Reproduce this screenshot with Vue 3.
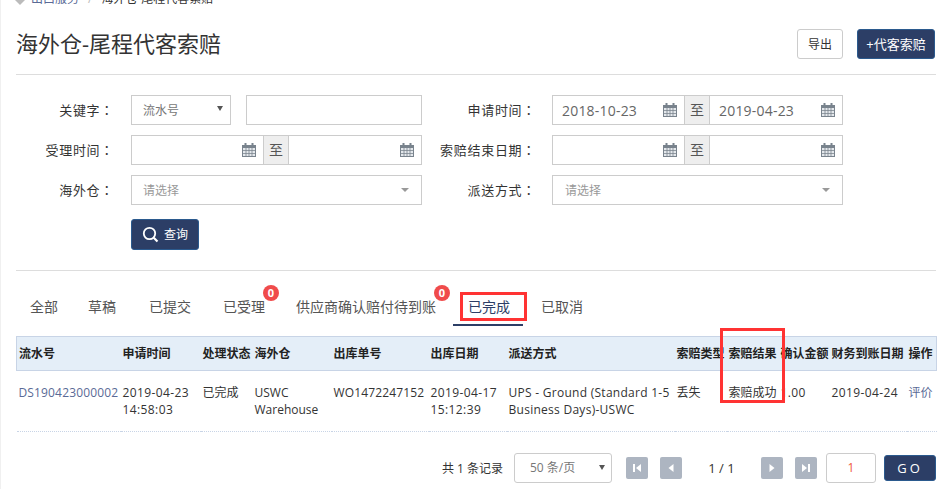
<script setup>
const columns = [
  { title: '流水号', width: 104 },
  { title: '申请时间', width: 80 },
  { title: '处理状态', width: 52 },
  { title: '海外仓', width: 79 },
  { title: '出库单号', width: 97 },
  { title: '出库日期', width: 78 },
  { title: '派送方式', width: 168 },
  { title: '索赔类型', width: 52 },
  { title: '索赔结果', width: 52 },
  { title: '确认金额', width: 51 },
  { title: '财务到账日期', width: 77 },
  { title: '操作', width: 30 },
]
const tabs = [
  { label: '全部', gap: 30 },
  { label: '草稿', gap: 33 },
  { label: '已提交', gap: 32 },
  { label: '已受理', badge: 0, gap: 31 },
  { label: '供应商确认赔付待到账', badge: 0, gap: 32 },
  { label: '已完成', active: true, gap: 31 },
  { label: '已取消', gap: 0 },
]
</script>

<template>
  <div class="page">
    <div class="crumbs">
      <svg class="crumb-icon" width="10" height="10" viewBox="0 0 10 10"><path d="M0 0h10v5L5 10 0 5Z" fill="#bbb" /></svg>
      <span class="crumb-link">出口服务</span>
      <span class="crumb-sep">/</span>
      <span class="crumb-cur">海外仓-尾程代客索赔</span>
    </div>

    <header class="head">
      <h1>海外仓-尾程代客索赔</h1>
      <div class="head-actions">
        <button class="btn btn-plain">导出</button>
        <button class="btn btn-dark btn-add">+代客索赔</button>
      </div>
    </header>

    <section class="filters">
      <div class="row">
        <label class="lab">关键字<span class="colon">：</span></label>
        <div class="wide split">
          <div class="box sel-small"><span class="val-cn">流水号</span><i class="caret dark"></i></div>
          <div class="box grow"></div>
        </div>
        <label class="lab lab2">申请时间<span class="colon">：</span></label>
        <div class="wide range">
          <div class="box date"><span class="val">2018-10-23</span><svg class="cal" viewBox="0 0 14 14"><use href="#cal" /></svg></div>
          <span class="zhi">至</span>
          <div class="box date"><span class="val">2019-04-23</span><svg class="cal" viewBox="0 0 14 14"><use href="#cal" /></svg></div>
        </div>
      </div>
      <div class="row">
        <label class="lab">受理时间<span class="colon">：</span></label>
        <div class="wide range">
          <div class="box date"><svg class="cal" viewBox="0 0 14 14"><use href="#cal" /></svg></div>
          <span class="zhi">至</span>
          <div class="box date"><svg class="cal" viewBox="0 0 14 14"><use href="#cal" /></svg></div>
        </div>
        <label class="lab lab2">索赔结束日期<span class="colon">：</span></label>
        <div class="wide range">
          <div class="box date"><svg class="cal" viewBox="0 0 14 14"><use href="#cal" /></svg></div>
          <span class="zhi">至</span>
          <div class="box date"><svg class="cal" viewBox="0 0 14 14"><use href="#cal" /></svg></div>
        </div>
      </div>
      <div class="row">
        <label class="lab">海外仓<span class="colon">：</span></label>
        <div class="wide box pick"><span class="ph">请选择</span><i class="caret"></i></div>
        <label class="lab lab2">派送方式<span class="colon">：</span></label>
        <div class="wide box pick"><span class="ph">请选择</span><i class="caret"></i></div>
      </div>
      <button class="btn btn-dark btn-search">
        <svg width="17" height="17" viewBox="0 0 17 17" fill="none" stroke="#fff"><circle cx="7.5" cy="7.5" r="5.7" stroke-width="1.8" /><path d="M11.7 11.7 15.5 15.5" stroke-width="2.2" /></svg>
        <span>查询</span>
      </button>
    </section>

    <nav class="tabs">
      <a v-for="t in tabs" :key="t.label" class="tab" :class="{ active: t.active }" :style="{ marginRight: t.gap + 'px' }">
        {{ t.label }}
        <span v-if="t.badge !== undefined" class="badge">{{ t.badge }}</span>
      </a>
    </nav>

    <table class="grid">
      <colgroup><col v-for="c in columns" :key="c.title" :style="{ width: c.width + 'px' }" /></colgroup>
      <thead><tr><th v-for="c in columns" :key="c.title">{{ c.title }}</th></tr></thead>
      <tbody>
        <tr>
          <td class="ls1"><a class="link">DS190423000002</a></td>
          <td class="ls4">2019-04-23 14:58:03</td>
          <td>已完成</td>
          <td>USWC Warehouse</td>
          <td class="ls1">WO1472247152</td>
          <td class="ls4">2019-04-17 15:12:39</td>
          <td class="ls3">UPS - Ground (Standard 1-5 Business Days)-USWC</td>
          <td>丢失</td>
          <td>索赔成功</td>
          <td class="ls4">1.00</td>
          <td class="ls4">2019-04-24</td>
          <td><a class="link">评价</a></td>
        </tr>
      </tbody>
    </table>

    <footer class="pager">
      <span class="total">共 1 条记录</span>
      <div class="size"><span>50 条/页</span><i class="caret dark"></i></div>
      <div class="nav-pair">
        <button class="pg"><svg viewBox="0 0 12 12"><path d="M2 2h2v8H2zM10 2v8L5 6z" /></svg></button>
        <button class="pg"><svg viewBox="0 0 12 12"><path d="M8.5 2v8L3.5 6z" /></svg></button>
      </div>
      <span class="count">1 / 1</span>
      <div class="nav-pair">
        <button class="pg"><svg viewBox="0 0 12 12"><path d="M3.5 2v8l5-4z" /></svg></button>
        <button class="pg"><svg viewBox="0 0 12 12"><path d="M2 2v8l5-4zM8 2h2v8H8z" /></svg></button>
      </div>
      <div class="jump">1</div>
      <button class="btn btn-dark go">GO</button>
    </footer>

    <div class="mark mark-tab"></div>
    <div class="mark mark-col"></div>

    <svg width="0" height="0" class="defs">
      <symbol id="cal" viewBox="0 0 14 14">
        <path d="M0 2h14v12H0z" fill="#79838d" />
        <path d="M2.5 0h2v3.5h-2zM9.5 0h2v3.5h-2z" fill="#79838d" />
        <path d="M1 5h2.6v2.2H1zM4.4 5h2.2v2.2H4.4zM7.4 5h2.2v2.2H7.4zM10.4 5H13v2.2h-2.6zM1 8h2.6v2.2H1zM4.4 8h2.2v2.2H4.4zM7.4 8h2.2v2.2H7.4zM10.4 8H13v2.2h-2.6zM1 11h2.6v2H1zM4.4 11h2.2v2H4.4zM7.4 11h2.2v2H7.4zM10.4 11H13v2h-2.6z" fill="#e4e8ec" />
      </symbol>
    </svg>
  </div>
</template>

<style>
html, body { margin: 0; background: #fff; }
</style>

<style scoped>
.page {
  position: relative;
  box-sizing: border-box;
  width: 945px;
  height: 489px;
  overflow: hidden;
  padding: 0 9px 0 15px;
  border-left: 1px solid #f0f0f0;
  font: 12px/17px "Open Sans", "Noto Sans CJK SC", sans-serif;
  color: #333;
  background: #fff;
}
.defs { position: absolute; }
.crumbs {
  display: flex;
  align-items: center;
  height: 14px;
  margin-top: -9px;
  font-size: 12px;
}
.crumb-icon { flex: none; margin: 4px 6px 0 -1px; }
.crumb-link { color: #5a6a96; }
.crumb-sep { margin: 0 9px; color: #bbb; }
.crumb-cur { color: #333; }
.head {
  display: flex;
  justify-content: space-between;
  height: 70px;
  padding-top: 24px;
  box-sizing: border-box;
  border-bottom: 1px solid #ddd;
}
h1 {
  margin: -2px 0 0;
  font-size: 22px;
  line-height: 32px;
  font-weight: 400;
  color: #333;
}
.head-actions { display: flex; gap: 14px; padding-right: 1px; height: 30px; }
.btn {
  box-sizing: border-box;
  border-radius: 3px;
  font: inherit;
  padding: 0;
  cursor: pointer;
}
.btn-plain { width: 46px; height: 30px; border: 1px solid #ccc; background: #fff; color: #333; }
.btn-dark { height: 30px; width: 78px; border: 1px solid #2b5a8e; background: #2c3e66; color: #fff; }
.btn-add { font-size: 13px; }
.filters { position: relative; padding-top: 20px; height: 196px; box-sizing: border-box; border-bottom: 1px solid #ddd; }
.row { display: flex; align-items: center; height: 30px; margin-bottom: 10px; }
.lab { width: 98px; text-align: right; font-size: 13px; color: #333; margin-right: 17px; white-space: nowrap; letter-spacing: .7px; }
.colon { font-family: "Noto Sans CJK TC", sans-serif; }
.lab2 { width: 114px; margin-right: 16px; }
.wide { width: 291px; }
.box { box-sizing: border-box; height: 30px; border: 1px solid #ccc; background: #fff; }
.split { display: flex; gap: 15px; }
.sel-small { position: relative; width: 100px; padding: 0 11px; line-height: 30px; flex: none; }
.val-cn { color: #777; }
.grow { flex: 1; }
.range { display: flex; }
.date { flex: 1 1 0; position: relative; display: flex; align-items: center; padding-left: 9px; }
.date:first-child { flex: none; width: 133px; }
.val { font-size: 14px; letter-spacing: .2px; color: #666; }
.date .cal { position: absolute; right: 7px; top: 7px; width: 14px; height: 14px; }
.zhi {
  flex: none;
  box-sizing: border-box;
  width: 26px;
  height: 30px;
  margin: 0 -1px;
  background: #eee;
  border: 1px solid #ccc;
  text-align: center;
  line-height: 28px;
  font-size: 14px;
  color: #555;
}
.pick { position: relative; display: flex; align-items: center; padding-left: 11px; }
.lab2 + .pick { padding-left: 12px; }
.ph { color: #999; }
.caret {
  position: absolute;
  top: 50%;
  right: 12px;
  margin-top: -2px;
  border-style: solid;
  border-width: 4px 4px 0;
  border-color: #999 transparent transparent;
}
.caret.dark { border-width: 5px 3.5px 0; border-top-color: #555; }
.sel-small .caret.dark { right: 7px; margin-top: -4px; }
.btn-search {
  display: flex;
  align-items: center;
  gap: 5px;
  width: 68px;
  height: 31px;
  margin: 14px 0 0 115px;
  padding-left: 10px;
}
.tabs { position: relative; display: flex; height: 55px; padding-left: 14px; font-size: 14px; color: #555; }
.tab { position: relative; padding-top: 26px; white-space: nowrap; line-height: 19px; }
.tab.active { color: #2c3e66; }
.tab.active::after { content: ""; position: absolute; left: -15px; right: -13px; top: 53px; height: 2px; background: #2c3e66; }
.badge {
  position: absolute;
  top: 14px;
  right: -14px;
  width: 16px;
  height: 16px;
  border-radius: 50%;
  background: #f04b4b;
  color: #fff;
  font-size: 11px;
  line-height: 16px;
  font-weight: 700;
  text-align: center;
}
.grid { table-layout: fixed; border-collapse: collapse; width: 920px; font-size: 12px; margin-top: 10px; }
th, td { padding: 0 0 0 2px; text-align: left; }
thead tr { background: #e4eef8; }
th { height: 34px; box-sizing: border-box; border-top: 1px solid #c8d4e6; border-bottom: 1px solid #c8d4e6; font-weight: 700; color: #222; white-space: nowrap; }
th:first-child { border-left: 1px solid #c8d4e6; }
th:last-child { border-right: 1px solid #c8d4e6; }
td { box-sizing: border-box; height: 61px; padding-top: 13px; vertical-align: top; border-bottom: 1px dotted #c8d4e6; }
.ls1 { letter-spacing: .15px; }
.ls3 { letter-spacing: .27px; }
.ls4 { letter-spacing: .4px; }
.link { color: #5a6a96; }
.pager { position: relative; display: flex; align-items: center; height: 30px; margin-top: 21px; padding-left: 426px; }
.total { width: 72px; white-space: nowrap; }
.size {
  position: relative;
  box-sizing: border-box;
  width: 98px;
  height: 30px;
  border: 1px solid #ccc;
  border-radius: 3px;
  padding-left: 15px;
  line-height: 28px;
  color: #777;
}
.size .caret.dark { right: 6px; margin-top: -3px; }
.nav-pair { display: flex; gap: 12px; margin-left: 14px; }
.pg { box-sizing: border-box; width: 22px; height: 22px; padding: 5px; border: 0; border-radius: 2px; background: #adb5c1; }
.pg svg { display: block; width: 12px; height: 12px; fill: #fff; }
.count { box-sizing: border-box; width: 65px; padding-right: 14px; margin-left: 14px; margin-right: -14px; text-align: center; font-size: 13px; color: #333; }
.jump {
  box-sizing: border-box;
  width: 50px;
  height: 30px;
  margin-left: 9px;
  border: 1px solid #ccc;
  border-radius: 3px;
  text-align: center;
  line-height: 28px;
  color: #f05a3c;
}
.go { width: 52px; height: 26px; margin-left: 8px; letter-spacing: 3px; font-size: 13px; }
.mark { position: absolute; box-sizing: border-box; border: 3px solid #f33; pointer-events: none; }
.mark-tab { left: 459px; top: 292px; width: 67px; height: 29px; }
.mark-col { left: 719px; top: 328px; width: 65px; height: 75px; }
</style>
